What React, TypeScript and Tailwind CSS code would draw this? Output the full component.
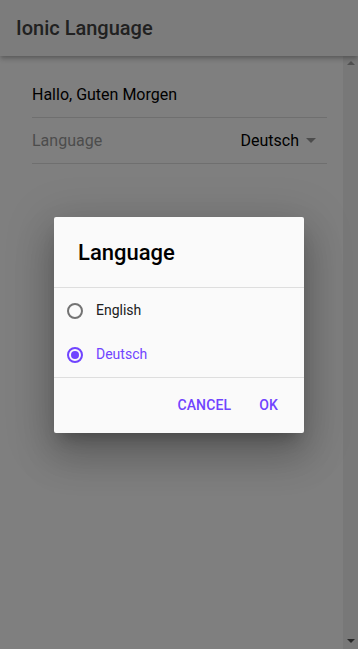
import React from "react";

const langs = [
  { id: "en", label: "English" },
  { id: "de", label: "Deutsch" },
];

function Scrollbar() {
  return (
    <div className="relative w-[15px] shrink-0 bg-[#f1f1f1]">
      <div className="absolute left-1/2 top-[5px] h-0 w-0 -translate-x-1/2 border-x-[4px] border-b-[4px] border-x-transparent border-b-[#a3a3a3]" />
      <div className="absolute bottom-[6px] left-1/2 h-0 w-0 -translate-x-1/2 border-x-[4px] border-t-[4px] border-x-transparent border-t-[#505050]" />
    </div>
  );
}

function LanguageAlert() {
  const selected = "de";
  return (
    <div className="absolute inset-0 flex items-center justify-center">
      <div className="w-[250px] rounded-[2px] bg-[#fafafa] shadow-[0_11px_15px_-7px_rgba(0,0,0,0.25),0_24px_38px_3px_rgba(0,0,0,0.16),0_9px_46px_8px_rgba(0,0,0,0.14)]">
        <div className="flex h-[71px] items-center border-b border-[#dedede] px-6 pt-[1px]">
          <h2 className="text-[22px] font-medium text-black">Language</h2>
        </div>
        <div className="border-b border-[#dedede] pt-[1px]">
          {langs.map((lang) => {
            const on = lang.id === selected;
            return (
              <div key={lang.id} className="flex h-[44px] items-center pl-[13px]">
                <span
                  className={
                    on
                      ? "flex h-4 w-4 items-center justify-center rounded-full border-2 border-[#7044ff]"
                      : "flex h-4 w-4 items-center justify-center rounded-full border-2 border-[#737373]"
                  }
                >
                  {on ? <span className="h-2 w-2 rounded-full bg-[#7044ff]" /> : null}
                </span>
                <span className={on ? "ml-[13px] text-[14px] text-[#7044ff]" : "ml-[13px] text-[14px] text-[#202020]"}>
                  {lang.label}
                </span>
              </div>
            );
          })}
        </div>
        <div className="flex h-[55px] items-center justify-end gap-[8px] pr-[16px]">
          <button className="px-[10px] py-2 text-[14px] font-medium uppercase tracking-[0.01em] text-[#7044ff]">Cancel</button>
          <button className="px-[10px] py-2 text-[14px] font-medium uppercase tracking-[0.01em] text-[#7044ff]">OK</button>
        </div>
      </div>
    </div>
  );
}

export default function App() {
  return (
    <div className="relative flex h-[649px] w-[358px] flex-col overflow-hidden bg-white font-['Roboto',sans-serif]">
      <header className="relative z-10 flex h-14 shrink-0 items-center bg-[#f8f8f8] px-4 shadow-[0_2px_4px_-1px_rgba(0,0,0,0.2),0_4px_5px_0_rgba(0,0,0,0.14)]">
        <h1 className="text-[20px] font-medium text-[#424242]">Ionic Language</h1>
      </header>
      <div className="flex min-h-0 flex-1">
        <main className="flex-1 p-4">
          <div className="pl-4">
            <div className="flex h-[46px] items-center border-b border-[#dedede] text-[16px] text-black">
              Hallo, Guten Morgen
            </div>
            <div className="flex h-[46px] items-center justify-between border-b border-[#dedede] text-[16px]">
              <span className="text-[#999999]">Language</span>
              <span className="flex items-center pr-[11px] text-black">
                Deutsch
                <span className="ml-[7px] h-0 w-0 border-x-[5px] border-t-[5px] border-x-transparent border-t-[#999999]" />
              </span>
            </div>
          </div>
        </main>
        <Scrollbar />
      </div>
      <div className="absolute inset-0 z-20 bg-black/50" />
      <div className="absolute inset-0 z-30">
        <LanguageAlert />
      </div>
    </div>
  );
}
